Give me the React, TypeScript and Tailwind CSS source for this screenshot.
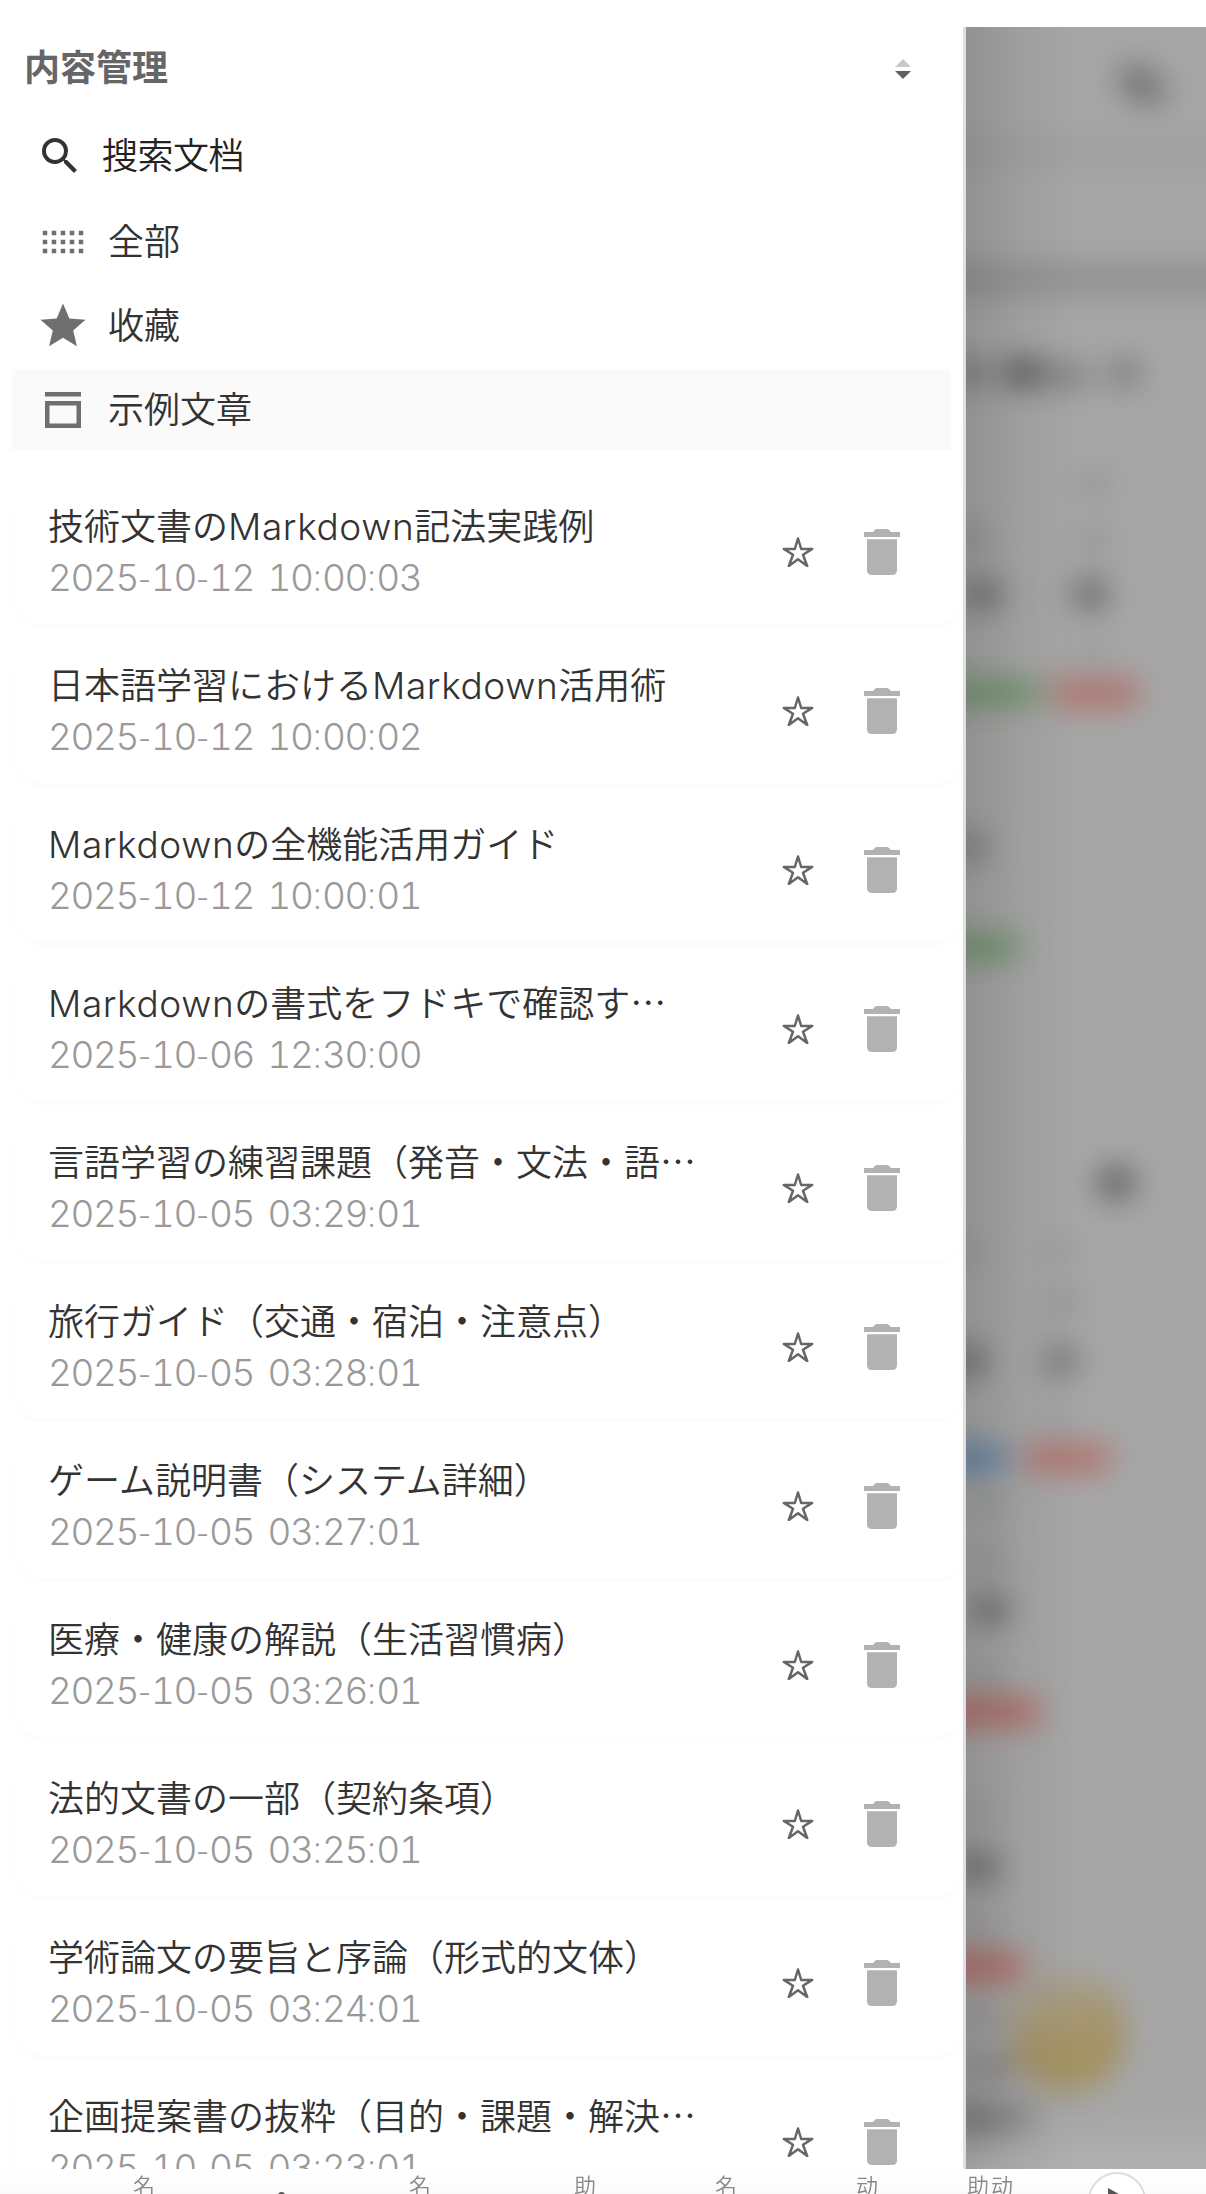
import type { ReactNode } from 'react';

interface Doc {
  title: string;
  date: string;
}

interface Smudge {
  x: number;
  y: number;
  w: number;
  h: number;
  color: string;
}

const docs: Doc[] = [
  { title: '技術文書のMarkdown記法実践例', date: '2025-10-12 10:00:03' },
  { title: '日本語学習におけるMarkdown活用術', date: '2025-10-12 10:00:02' },
  { title: 'Markdownの全機能活用ガイド', date: '2025-10-12 10:00:01' },
  { title: 'Markdownの書式をフドキで確認す…', date: '2025-10-06 12:30:00' },
  { title: '言語学習の練習課題（発音・文法・語…', date: '2025-10-05 03:29:01' },
  { title: '旅行ガイド（交通・宿泊・注意点）', date: '2025-10-05 03:28:01' },
  { title: 'ゲーム説明書（システム詳細）', date: '2025-10-05 03:27:01' },
  { title: '医療・健康の解説（生活習慣病）', date: '2025-10-05 03:26:01' },
  { title: '法的文書の一部（契約条項）', date: '2025-10-05 03:25:01' },
  { title: '学術論文の要旨と序論（形式的文体）', date: '2025-10-05 03:24:01' },
  { title: '企画提案書の抜粋（目的・課題・解決…', date: '2025-10-05 03:23:01' },
];

// page content behind the backdrop, centre points relative to the backdrop
const smudges: Smudge[] = [
  { x: 170, y: 54, w: 32, h: 30, color: '#6c6c6c' },
  { x: 184, y: 64, w: 32, h: 26, color: '#707070' },
  { x: 120, y: 124, w: 340, h: 14, color: '#9a9a9a' },
  { x: 120, y: 252, w: 340, h: 24, color: '#8b8b8b' },
  { x: 4, y: 346, w: 34, h: 26, color: '#707070' },
  { x: 57, y: 346, w: 42, h: 28, color: '#565656' },
  { x: 102, y: 349, w: 44, h: 22, color: '#787878' },
  { x: 158, y: 346, w: 30, h: 26, color: '#747474' },
  { x: 127, y: 457, w: 26, h: 20, color: '#8a8a8a' },
  { x: 127, y: 513, w: 28, h: 20, color: '#8c8c8c' },
  { x: 124, y: 567, w: 34, h: 30, color: '#666666' },
  { x: 126, y: 625, w: 24, h: 14, color: '#909090' },
  { x: 6, y: 511, w: 24, h: 20, color: '#7c7c7c' },
  { x: 16, y: 567, w: 40, h: 28, color: '#6a6a6a' },
  { x: 24, y: 666, w: 100, h: 26, color: '#6c9168' },
  { x: 129, y: 666, w: 88, h: 26, color: '#b06e66' },
  { x: 5, y: 820, w: 30, h: 26, color: '#707070' },
  { x: 12, y: 920, w: 84, h: 26, color: '#6c9168' },
  { x: 150, y: 1156, w: 36, h: 30, color: '#5c5c5c' },
  { x: 95, y: 1225, w: 24, h: 18, color: '#909090' },
  { x: 97, y: 1276, w: 30, h: 20, color: '#8c8c8c' },
  { x: 95, y: 1334, w: 34, h: 30, color: '#747474' },
  { x: 95, y: 1392, w: 24, h: 14, color: '#949494' },
  { x: 3, y: 1334, w: 32, h: 30, color: '#666666' },
  { x: 4, y: 1225, w: 24, h: 14, color: '#8c8c8c' },
  { x: 8, y: 1431, w: 68, h: 26, color: '#5c80a2' },
  { x: 101, y: 1431, w: 86, h: 26, color: '#b06e66' },
  { x: 24, y: 1478, w: 28, h: 18, color: '#8a8a8a' },
  { x: 24, y: 1532, w: 30, h: 18, color: '#8a8a8a' },
  { x: 24, y: 1583, w: 40, h: 28, color: '#6c6c6c' },
  { x: 22, y: 1648, w: 28, h: 14, color: '#8c8c8c' },
  { x: 22, y: 1685, w: 106, h: 26, color: '#b0655e' },
  { x: 14, y: 1785, w: 24, h: 14, color: '#8c8c8c' },
  { x: 12, y: 1840, w: 40, h: 30, color: '#6c6c6c' },
  { x: 14, y: 1902, w: 24, h: 14, color: '#8c8c8c' },
  { x: 12, y: 1940, w: 92, h: 26, color: '#b0655e' },
  { x: 16, y: 1990, w: 30, h: 18, color: '#8a8a8a' },
  { x: 24, y: 2040, w: 60, h: 20, color: '#868686' },
  { x: 10, y: 2094, w: 44, h: 30, color: '#707070' },
  { x: 50, y: 2092, w: 30, h: 28, color: '#7c7c7c' },
];

function MenuIcon({ d }: { d: string }) {
  return (
    <svg viewBox="0 0 24 24" className="w-[54px] h-[54px] fill-[#6f6f6f] shrink-0">
      <path d={d} />
    </svg>
  );
}

function MenuItem({ icon, label, active }: { icon: ReactNode; label: string; active?: boolean }) {
  return (
    <div className={`flex items-center h-[81px] mb-[3px] mx-3 pl-6 gap-[18px] ${active ? 'bg-[#fafafa]' : ''}`}>
      {icon}
      <span className="leading-[54px] pb-[5px]">{label}</span>
    </div>
  );
}

function DocTitle({ text }: { text: string }) {
  return (
    <div className="h-[51px] leading-[47px] text-[#333]">
      {text.split(/(Markdown)/).map((part, i) =>
        part === 'Markdown' ? (
          <span key={i} className="font-['Inter'] text-[37px] font-light tracking-[0.6px]">{part}</span>
        ) : (
          <span key={i}>{part}</span>
        ),
      )}
    </div>
  );
}

const separatorClass: Record<string, string> = {
  '-': 'w-[13px]',
  ':': 'w-[9.4px]',
  ' ': 'w-[13.6px]',
};

function DocDate({ date }: { date: string }) {
  return (
    <div className="h-[51px] leading-[52px] text-[37px] text-[#999] font-light font-['Inter'] tabular-nums tracking-[-1.45px]">
      {date.split(/([-: ])/).map((part, i) =>
        separatorClass[part] ? (
          <span key={i} className={`inline-flex justify-center whitespace-pre text-[36px] tracking-normal font-['Open_Sans'] ${separatorClass[part]}`}>
            {part}
          </span>
        ) : (
          <span key={i}>{part}</span>
        ),
      )}
    </div>
  );
}

function DocCard({ doc }: { doc: Doc }) {
  return (
    <div className="flex items-center h-36 mb-[15px] ml-[15px] pl-[33px] pr-[63px] rounded-[27px] bg-white shadow-[0_3px_6px_rgba(0,0,0,0.02)] shrink-0">
      <div className="flex-1 whitespace-nowrap">
        <DocTitle text={doc.title} />
        <DocDate date={doc.date} />
      </div>
      <svg viewBox="0 0 32 30" className="w-8 h-[30px] mr-[50px] fill-none stroke-[#666] stroke-[2.5]" strokeLinejoin="round">
        <path d="M16 1.5 L19.2 12 L30.2 11.9 L21 17.8 L25.2 29 L16 22.3 L6.8 29 L11 17.8 L1.8 11.9 L12.8 12 Z" />
      </svg>
      <svg viewBox="0 0 36 46" className="w-9 h-[46px] fill-[#b2b2b2]">
        <path d="M0 3 H9 L11 .8 Q11.7 0 13 0 H22.5 Q24 0 24.8 .8 L27 3 H36 V8 H0 Z" />
        <path d="M3 10.3 H33 V41 Q33 46 28 46 H8 Q3 46 3 41 Z" />
      </svg>
    </div>
  );
}

function Drawer() {
  return (
    <aside className="flex flex-col w-[966px] shrink-0 overflow-hidden bg-white border-r-[3px] border-[#dfdfdf] text-[#333] font-[350]">
      <div className="flex items-center justify-between h-[84px] pl-6 pr-[52px] shrink-0">
        <h1 className="text-[#666] font-bold leading-[54px] pb-[8px]">内容管理</h1>
        <svg viewBox="0 0 16 20" className="w-4 h-5">
          <path d="M8 0 L16 8 H0 Z" fill="#c8c8c8" />
          <path d="M0 12 H16 L8 20 Z" fill="#606060" />
        </svg>
      </div>
      <div className="flex items-center h-[90px] pl-9 gap-[18px] shrink-0">
        <svg viewBox="0 0 24 24" className="w-12 h-12 fill-[#333]">
          <path d="M15.5 14h-.79l-.28-.27A6.471 6.471 0 0 0 16 9.5 6.5 6.5 0 1 0 9.5 16c1.61 0 3.09-.59 4.23-1.57l.27.28v.79l5 4.99L20.49 19l-4.99-5zm-6 0C7.01 14 5 11.99 5 9.5S7.01 5 9.5 5 14 7.01 14 9.5 11.99 14 9.5 14z" />
        </svg>
        <span className="leading-[54px] pb-[6px] tracking-[-0.5px] text-[#222]">搜索文档</span>
      </div>
      <nav className="shrink-0 h-[279px]">
        <MenuItem
          label="全部"
          icon={<MenuIcon d="M3 7h2v2H3zM7 7h2v2H7zM11 7h2v2h-2zM15 7h2v2h-2zM19 7h2v2h-2zM3 11h2v2H3zM7 11h2v2H7zM11 11h2v2h-2zM15 11h2v2h-2zM19 11h2v2h-2zM3 15h2v2H3zM7 15h2v2H7zM11 15h2v2h-2zM15 15h2v2h-2zM19 15h2v2h-2z" />}
        />
        <MenuItem
          label="收藏"
          icon={<MenuIcon d="M12 17.27 18.18 21l-1.64-7.03L22 9.24l-7.19-.61L12 2 9.19 8.63 2 9.24l5.46 4.73L5.82 21z" />}
        />
        <MenuItem
          active
          label="示例文章"
          icon={<MenuIcon d="M4 4h16v2H4zM4 8h16v12H4zM6 10v8h12v-8z" />}
        />
      </nav>
      {docs.map((doc) => (
        <DocCard key={doc.title} doc={doc} />
      ))}
    </aside>
  );
}

function Backdrop() {
  return (
    <div className="relative flex-1 overflow-hidden bg-[#a6a6a6]">
      <div className="absolute inset-0 blur-[15px]">
        {smudges.map((s, i) => (
          <div
            key={i}
            className="absolute -translate-x-1/2 -translate-y-1/2 rounded-xl"
            style={{ left: s.x, top: s.y, width: s.w, height: s.h, background: s.color }}
          />
        ))}
        <div className="absolute left-[42px] top-[1946px] w-[118px] h-[118px] rounded-full bg-linear-160 from-[#a59f8c] from-15% via-[#a5946a] via-50% to-[#a08d55]" />
      </div>
      <div className="absolute inset-y-0 left-0 w-[110px] bg-linear-to-r from-black/12 via-black/4 to-transparent" />
      <div className="absolute inset-x-0 bottom-0 h-16 bg-linear-to-b from-white/0 to-white/12" />
    </div>
  );
}

function PageStrip() {
  return (
    <div className="relative h-[25px] overflow-hidden bg-linear-to-b from-white to-[#fafafa] text-[22px] leading-[24px] text-[#888] font-[350]">
      <div className="absolute inset-0 blur-[0.7px]">
        <span className="absolute left-[133px] top-[3px]">名</span>
        <span className="absolute left-[409px] top-[3px]">名</span>
        <span className="absolute left-[574px] top-[3px]">助</span>
        <span className="absolute left-[715px] top-[3px]">名</span>
        <span className="absolute left-[856px] top-[3px]">动</span>
        <span className="absolute left-[967px] top-[3px] tracking-[2px]">助动</span>
        <span className="absolute left-[278px] top-[23px] size-[7px] rounded-full bg-[#555]" />
      </div>
      <div className="absolute left-[1088px] top-[3px] size-[58px] rounded-full border-2 border-[#ddd] bg-white">
        <svg viewBox="0 0 20 22" className="ml-[18px] mt-[14px] w-5 h-[22px] fill-[#555]">
          <path d="M0 0 L20 11 L0 22 Z" />
        </svg>
      </div>
    </div>
  );
}

export default function App() {
  return (
    <div className="flex flex-col w-[1206px] h-[2194px] overflow-hidden bg-white pt-[27px] text-[36px] font-['Noto_Sans_CJK_JP','Noto_Sans_CJK_SC',sans-serif]">
      <div className="flex h-[2142px] shrink-0">
        <Drawer />
        <Backdrop />
      </div>
      <PageStrip />
    </div>
  );
}
